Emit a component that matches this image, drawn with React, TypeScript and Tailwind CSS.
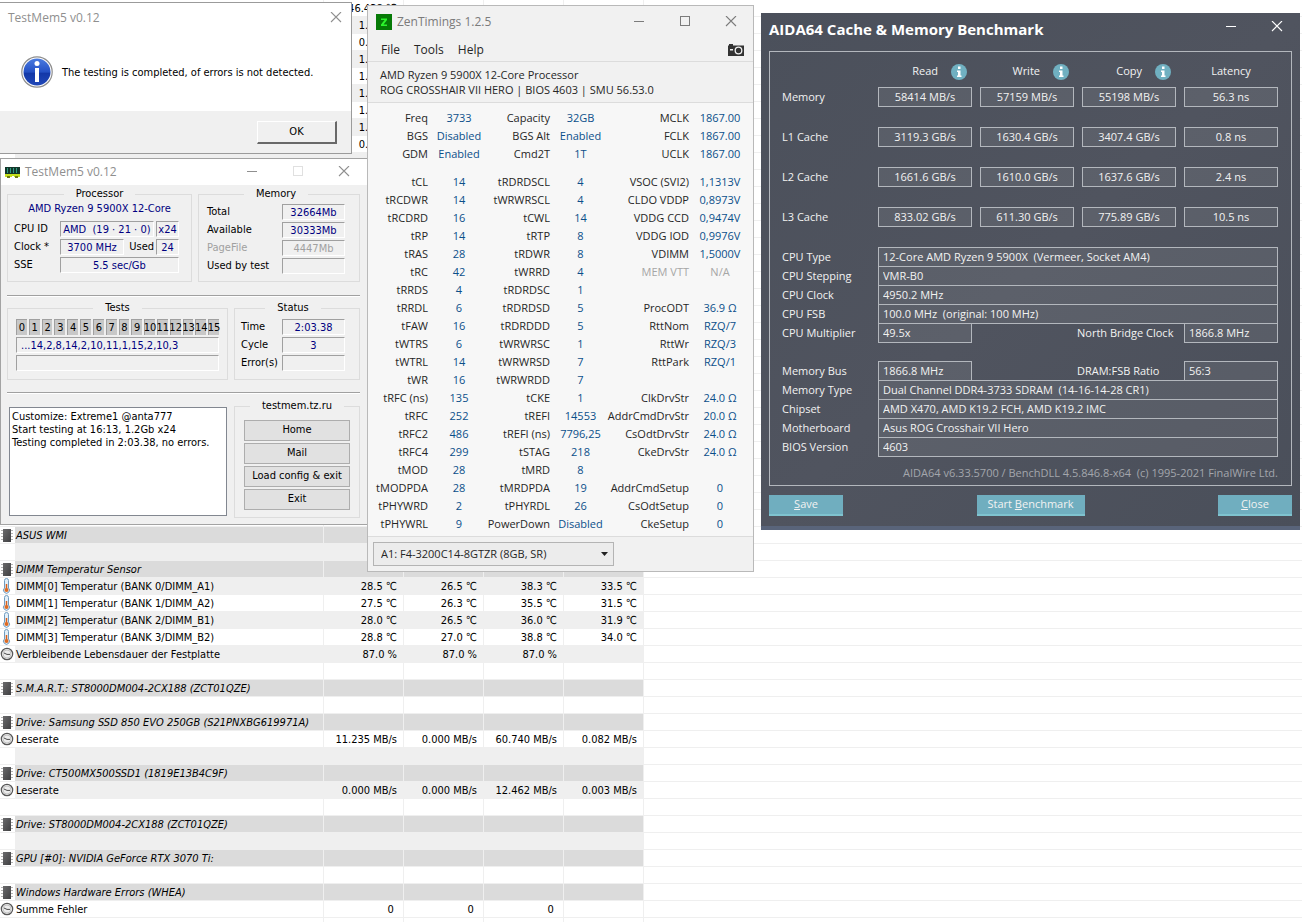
import { Fragment, type ReactNode } from "react";

type SensorRow = {
	kind?: "head" | "temp" | "clock";
	name?: string;
	values?: string[];
	shaded?: boolean;
};

const topVoltages = ["46.438 ℃", "1.263 V", "0.825 V", "1.131 V", "1.788 V", "1.100 V", "1.825 V", "1.263 V", "0.950 V"];

const sensorRows: SensorRow[] = [
	...topVoltages.map((v, i) => ({ values: [v], shaded: i % 2 === 1 })),
	...Array.from({ length: 22 }, (_, i) => ({ shaded: i % 2 === 0 })),
	{ kind: "head", name: "ASUS WMI" },
	{ shaded: true },
	{ kind: "head", name: "DIMM Temperatur Sensor" },
	{ kind: "temp", name: "DIMM[0] Temperatur (BANK 0/DIMM_A1)", values: ["28.5 ℃", "26.5 ℃", "38.3 ℃", "33.5 ℃"], shaded: true },
	{ kind: "temp", name: "DIMM[1] Temperatur (BANK 1/DIMM_A2)", values: ["27.5 ℃", "26.3 ℃", "35.5 ℃", "31.5 ℃"] },
	{ kind: "temp", name: "DIMM[2] Temperatur (BANK 2/DIMM_B1)", values: ["28.0 ℃", "26.5 ℃", "36.0 ℃", "31.9 ℃"], shaded: true },
	{ kind: "temp", name: "DIMM[3] Temperatur (BANK 3/DIMM_B2)", values: ["28.8 ℃", "27.0 ℃", "38.8 ℃", "34.0 ℃"] },
	{ kind: "clock", name: "Verbleibende Lebensdauer der Festplatte", values: ["87.0 %", "87.0 %", "87.0 %"], shaded: true },
	{},
	{ kind: "head", name: "S.M.A.R.T.: ST8000DM004-2CX188 (ZCT01QZE)" },
	{},
	{ kind: "head", name: "Drive: Samsung SSD 850 EVO 250GB (S21PNXBG619971A)" },
	{ kind: "clock", name: "Leserate", values: ["11.235 MB/s", "0.000 MB/s", "60.740 MB/s", "0.082 MB/s"] },
	{ shaded: true },
	{ kind: "head", name: "Drive: CT500MX500SSD1 (1819E13B4C9F)" },
	{ kind: "clock", name: "Leserate", values: ["0.000 MB/s", "0.000 MB/s", "12.462 MB/s", "0.003 MB/s"], shaded: true },
	{},
	{ kind: "head", name: "Drive: ST8000DM004-2CX188 (ZCT01QZE)" },
	{ shaded: true },
	{ kind: "head", name: "GPU [#0]: NVIDIA GeForce RTX 3070 Ti:" },
	{},
	{ kind: "head", name: "Windows Hardware Errors (WHEA)" },
	{ kind: "clock", name: "Summe Fehler", values: ["0\u00a0", "0\u00a0", "0\u00a0"] },
	{},
];

const clockTimings = [
	["Freq", "3733", "Capacity", "32GB", "MCLK", "1867.00"],
	["BGS", "Disabled", "BGS Alt", "Enabled", "FCLK", "1867.00"],
	["GDM", "Enabled", "Cmd2T", "1T", "UCLK", "1867.00"],
];

const timings = [
	["tCL", "14", "tRDRDSCL", "4", "VSOC (SVI2)", "1,1313V"],
	["tRCDWR", "14", "tWRWRSCL", "4", "CLDO VDDP", "0,8973V"],
	["tRCDRD", "16", "tCWL", "14", "VDDG CCD", "0,9474V"],
	["tRP", "14", "tRTP", "8", "VDDG IOD", "0,9976V"],
	["tRAS", "28", "tRDWR", "8", "VDIMM", "1,5000V"],
	["tRC", "42", "tWRRD", "4", "MEM VTT", "N/A"],
	["tRRDS", "4", "tRDRDSC", "1", "", ""],
	["tRRDL", "6", "tRDRDSD", "5", "ProcODT", "36.9 Ω"],
	["tFAW", "16", "tRDRDDD", "5", "RttNom", "RZQ/7"],
	["tWTRS", "6", "tWRWRSC", "1", "RttWr", "RZQ/3"],
	["tWTRL", "14", "tWRWRSD", "7", "RttPark", "RZQ/1"],
	["tWR", "16", "tWRWRDD", "7", "", ""],
	["tRFC (ns)", "135", "tCKE", "1", "ClkDrvStr", "24.0 Ω"],
	["tRFC", "252", "tREFI", "14553", "AddrCmdDrvStr", "20.0 Ω"],
	["tRFC2", "486", "tREFI (ns)", "7796,25", "CsOdtDrvStr", "24.0 Ω"],
	["tRFC4", "299", "tSTAG", "218", "CkeDrvStr", "24.0 Ω"],
	["tMOD", "28", "tMRD", "8", "", ""],
	["tMODPDA", "28", "tMRDPDA", "19", "AddrCmdSetup", "0"],
	["tPHYWRD", "2", "tPHYRDL", "26", "CsOdtSetup", "0"],
	["tPHYWRL", "9", "PowerDown", "Disabled", "CkeSetup", "0"],
];

const benchmarks = [
	["Memory", "58414 MB/s", "57159 MB/s", "55198 MB/s", "56.3 ns"],
	["L1 Cache", "3119.3 GB/s", "1630.4 GB/s", "3407.4 GB/s", "0.8 ns"],
	["L2 Cache", "1661.6 GB/s", "1610.0 GB/s", "1637.6 GB/s", "2.4 ns"],
	["L3 Cache", "833.02 GB/s", "611.30 GB/s", "775.89 GB/s", "10.5 ns"],
];

function ChipIcon() {
	return (
		<svg width="14" height="15" viewBox="0 0 14 15" className="block">
			<defs>
				<linearGradient id="chipBody" x1="0" y1="0" x2="1" y2="1">
					<stop offset="0" stopColor="#6a6a6c" />
					<stop offset="1" stopColor="#404042" />
				</linearGradient>
			</defs>
			<path d="M1 2.5h12M1 5.5h12M1 8.5h12M1 11.5h12" stroke="#b4b4b4" strokeWidth="1" />
			<rect x="3" y="1" width="8" height="13" fill="url(#chipBody)" />
		</svg>
	);
}

function ThermometerIcon() {
	return (
		<svg width="13" height="16" viewBox="0 0 13 16" className="block">
			<path d="M4.500 2.500a2 2 0 0 1 4 0v7.500a3 3 0 1 1-4 0z" fill="#e3eff8" stroke="#6f9cc0" />
			<path d="M6.500 6v6" stroke="#d9601c" strokeWidth="1.500" />
			<circle cx="6.500" cy="12" r="2" fill="#dd6a22" />
		</svg>
	);
}

function ClockIcon() {
	return (
		<svg width="14" height="14" viewBox="0 0 14 14" className="block">
			<circle cx="7" cy="7" r="5.7" fill="#ececec" stroke="#575757" strokeWidth="1.2" />
			<circle cx="7" cy="7" r="4" fill="none" stroke="#c4c4c4" />
			<path d="M4 6l3 1.4h3" fill="none" stroke="#4a4a4a" />
		</svg>
	);
}

function MinimizeGlyph() {
	return (
		<svg width="12" height="12" viewBox="0 0 12 12" stroke="currentColor">
			<path d="M1 5.5h10" />
		</svg>
	);
}

function MaximizeGlyph() {
	return (
		<svg width="12" height="12" viewBox="0 0 12 12" stroke="currentColor" fill="none">
			<rect x="1.5" y="0.5" width="9" height="9" />
		</svg>
	);
}

function CloseGlyph() {
	return (
		<svg width="12" height="12" viewBox="0 0 12 12" stroke="currentColor" strokeWidth="1.1">
			<path d="M1 0l10 10M11 0L1 10" />
		</svg>
	);
}

function InfoBubble() {
	return (
		<svg width="16" height="16" viewBox="0 0 16 16">
			<circle cx="8" cy="8" r="8" fill="#70b0c1" />
			<path d="M7 2.500h2.500V5H7zM6 6.500h3.500V11.500h1V13H6v-1.500h1V8H6z" fill="#fff" />
		</svg>
	);
}

function SensorTable() {
	return (
		<table className="w-full table-fixed border-separate border-spacing-0 text-[11px] leading-[14px] whitespace-nowrap text-black">
			<colgroup>
				<col className="w-[15px]" />
				<col className="w-[309px]" />
				<col className="w-20" />
				<col className="w-20" />
				<col className="w-20" />
				<col className="w-20" />
				<col />
			</colgroup>
			<tbody>
				{sensorRows.map((row, i) => {
					const bg = row.kind === "head" ? "bg-[#dbdbdb]" : row.shaded ? "bg-[#efefef]" : "bg-white";
					return (
						<tr key={i} className="h-[17px]">
							<td className="border-b border-[#efefef] p-0">
								{row.kind === "head" && <ChipIcon />}
								{row.kind === "temp" && <ThermometerIcon />}
								{row.kind === "clock" && <ClockIcon />}
							</td>
							<td className={`border-r border-b border-[#efefef] p-0 pt-0.5 pl-px ${bg} ${row.kind === "head" ? "italic" : ""}`}>
								{row.name}
							</td>
							{[0, 1, 2, 3].map((c) => (
								<td key={c} className={`border-r border-b border-[#efefef] p-0 pt-0.5 pr-1.5 text-right ${bg}`}>
									{row.values?.[c]}
								</td>
							))}
							<td className="border-b border-[#efefef] p-0" />
						</tr>
					);
				})}
			</tbody>
		</table>
	);
}

function MessageBox() {
	return (
		<section className="absolute top-[2px] left-0 w-[352px] border border-l-0 border-[#9b9b9b] bg-white text-[11px] text-black">
			<header className="flex h-[30px] items-center justify-between pr-[9px] pl-2 font-[family-name:'Open_Sans',sans-serif] text-xs text-[#8f8f8f]">
				<h2>TestMem5 v0.12</h2>
				<button aria-label="Close message">
					<CloseGlyph />
				</button>
			</header>
			<div className="flex h-[78px] items-center gap-[9px] pl-[21px]">
				<svg width="32" height="32" viewBox="0 0 32 32">
					<defs>
						<linearGradient id="infoBlue" x1="0" y1="0" x2="0" y2="1">
							<stop offset="0" stopColor="#4a7be0" />
							<stop offset="0.5" stopColor="#2450c4" />
							<stop offset="0.55" stopColor="#1338a8" />
							<stop offset="1" stopColor="#2048b8" />
						</linearGradient>
					</defs>
					<circle cx="16" cy="16" r="15.200" fill="#fff" stroke="#8d8d8d" strokeWidth="1.200" />
					<circle cx="16" cy="16" r="13.500" fill="url(#infoBlue)" />
					<circle cx="16" cy="7.500" r="2.500" fill="#fff" />
					<path d="M14 12h4v14h-4z" fill="#fff" />
				</svg>
				<p className="pt-0.5">The testing is completed, of errors is not detected.</p>
			</div>
			<footer className="flex h-[42px] items-center justify-end bg-[#f0f0f0] pr-3.5">
				<button className="h-[23px] w-20 border border-r-2 border-b-2 border-white border-r-[#696969] border-b-[#696969] bg-[#f0f0f0] pt-0.5">OK</button>
			</footer>
		</section>
	);
}

function Group({ title, className, children }: { title: string; className: string; children: ReactNode }) {
	return (
		<fieldset className={`min-w-0 border border-[#dcdcdc] ${className}`}>
			<legend className="mx-auto px-3 text-center leading-[14px]">{title}</legend>
			{children}
		</fieldset>
	);
}

function SunkenField({ id, value, className, label }: { id: string; value: string; className: string; label?: string }) {
	return (
		<input
			id={id}
			aria-label={label}
			readOnly
			value={value}
			className={`h-4 min-w-0 border border-white border-t-[#a0a0a0] border-l-[#a0a0a0] bg-transparent px-0 leading-[14px] ${className}`}
		/>
	);
}

function LabeledField({ id, label, value, muted }: { id: string; label: string; value: string; muted?: boolean }) {
	return (
		<div className={`flex items-center justify-between leading-4 ${muted ? "text-[#a0a0a0]" : ""}`}>
			<label htmlFor={id}>{label}</label>
			<SunkenField id={id} value={value} className={`w-[63px] text-center ${muted ? "" : "text-[#000080]"}`} />
		</div>
	);
}

function Divider() {
	return <hr className="border-t border-b border-t-[#a0a0a0] border-b-white" />;
}

function TestMemWindow() {
	const button = "h-[21px] w-full border border-[#adadad] bg-[#e1e1e1]";
	return (
		<section className="absolute top-[158px] left-0 w-[368px] border border-[#a3a3a3] bg-[#f0f0f0] text-[11px] whitespace-nowrap text-black">
			<header className="flex h-[26px] items-center bg-white pr-[17px] pl-1 font-[family-name:'Open_Sans',sans-serif] text-xs text-[#8f8f8f]">
				<svg width="15" height="11" viewBox="0 0 15 11">
					<path d="M0 0h15v8H0z" fill="#12372b" />
					<path d="M2.500 1v5M5.500 1v5M8.500 1v5M11.500 1v5" stroke="#2f9c80" />
					<path d="M0 7h15v3h-6V9H7v1H0z" fill="#c6e01c" />
					<path d="M2 9h3v2H2zM10 9h3v2h-3z" fill="#6d7c12" />
				</svg>
				<h2 className="ml-[5px] flex-1">TestMem5 v0.12</h2>
				<div className="flex gap-[34px]">
					<button aria-label="Minimize TestMem5">
						<MinimizeGlyph />
					</button>
					<button aria-label="Maximize TestMem5" disabled className="text-[#e0e0e0]">
						<MaximizeGlyph />
					</button>
					<button aria-label="Close TestMem5">
						<CloseGlyph />
					</button>
				</div>
			</header>
			<div className="pt-0.5 pr-[7px] pb-1.5 pl-1.5">
				<div className="flex gap-1.5">
					<Group title="Processor" className="w-[185px] px-1.5 pb-2">
						<p className="text-center leading-4 text-[#000080]">AMD Ryzen 9 5900X 12-Core</p>
						<div className="mt-1 flex flex-col gap-0.5 pr-1.5 leading-4">
							<div className="flex gap-0.5">
								<label htmlFor="cpuid" className="w-11">
									CPU ID
								</label>
								<SunkenField id="cpuid" value="AMD  (19 · 21 · 0)" className="w-[95px] text-center text-[#000080]" />
								<SunkenField id="threads" label="Threads" value="x24" className="w-[23px] text-center text-[#000080]" />
							</div>
							<div className="flex gap-0.5">
								<label htmlFor="clock" className="w-11">
									Clock *
								</label>
								<SunkenField id="clock" value="3700 MHz" className="w-[65px] text-center text-[#000080]" />
								<label htmlFor="used" className="w-7 text-right">
									Used
								</label>
								<SunkenField id="used" value="24" className="w-[23px] text-center text-[#000080]" />
							</div>
							<div className="flex gap-0.5">
								<label htmlFor="sse" className="w-11">
									SSE
								</label>
								<SunkenField id="sse" value="5.5 sec/Gb" className="w-[120px] text-center text-[#000080]" />
							</div>
						</div>
					</Group>
					<Group title="Memory" className="flex-1 pr-3.5 pl-2">
						<div className="mt-[3px] flex flex-col gap-0.5">
							<LabeledField id="total" label="Total" value="32664Mb" />
							<LabeledField id="available" label="Available" value="30333Mb" />
							<LabeledField id="pagefile" label="PageFile" value="4447Mb" muted />
							<LabeledField id="usedbytest" label="Used by test" value="" />
						</div>
					</Group>
				</div>
				<div className="mt-[13px] mb-1">
					<Divider />
				</div>
				<div className="flex gap-1.5">
					<Group title="Tests" className="w-[221px] px-2 pb-2">
						<div className="mt-1 flex flex-col gap-0.5">
							<ol className="flex h-4 gap-0.5 leading-4">
								{Array.from({ length: 16 }, (_, i) => (
									<li key={i} className="flex min-w-0 flex-1 justify-center border-t border-l border-[#a0a0a0] bg-[#c8c8c8]">
										{i}
									</li>
								))}
							</ol>
							<SunkenField id="queue" label="Test queue" value="...14,2,8,14,2,10,11,1,15,2,10,3" className="w-full indent-1 text-[#000080]" />
							<SunkenField id="progress" label="Progress" value="" className="w-full" />
						</div>
					</Group>
					<Group title="Status" className="flex-1 pr-3.5 pl-1.5">
						<div className="mt-1 flex flex-col gap-0.5">
							<LabeledField id="time" label="Time" value="2:03.38" />
							<LabeledField id="cycle" label="Cycle" value="3" />
							<LabeledField id="errors" label="Error(s)" value="" />
						</div>
					</Group>
				</div>
				<div className="mt-3 mb-[5px]">
					<Divider />
				</div>
				<div className="flex gap-1.5">
					<div className="flex w-[221px] pt-2 pr-px pb-0.5 pl-0.5">
						<textarea
							aria-label="Log"
							readOnly
							className="h-[109px] w-full resize-none border border-[#828790] bg-white px-0.5 py-0.5 leading-[13px]"
							value={"Customize: Extreme1 @anta777\nStart testing at 16:13, 1.2Gb x24\nTesting completed in 2:03.38, no errors."}
						/>
					</div>
					<Group title="testmem.tz.ru" className="flex-1 px-[9px] pb-[7px]">
						<div className="mt-[7px] flex flex-col gap-0.5">
							<button className={button}>Home</button>
							<button className={button}>Mail</button>
							<button className={button}>Load config &amp; exit</button>
							<button className={button}>Exit</button>
						</div>
					</Group>
				</div>
			</div>
		</section>
	);
}

function TimingRows({ rows }: { rows: string[][] }) {
	return (
		<>
			{rows.map((row) => (
				<tr key={row[0]} className="h-[18px]">
					{[0, 2, 4].map((c) => {
						const off = row[c] === "MEM VTT";
						return (
							<Fragment key={c}>
								<th scope="row" className={`p-0 font-normal ${off ? "text-[#a6a6a6]" : ""}`}>
									<span className="flex justify-end">{row[c]}</span>
								</th>
								<td className={`p-0 text-center ${off ? "text-[#a6a6a6]" : "text-[#0b4f8a]"}`}>{row[c + 1]}</td>
							</Fragment>
						);
					})}
				</tr>
			))}
		</>
	);
}

function ZenTimingsWindow() {
	return (
		<section className="absolute top-[5px] left-[367px] w-[387px] border border-[#b9b9b9] bg-[#f1f1f1] font-[family-name:'Open_Sans',sans-serif] text-[11px] whitespace-nowrap text-[#262626]">
			<header className="flex h-8 items-center pr-4 pl-2 text-xs text-[#7b7b7b]">
				<svg width="16" height="16" viewBox="0 0 16 16">
					<rect width="16" height="16" fill="#067a06" />
					<path d="M5 4.500h6v1.500L7.500 10.500H11V12H5v-1.500L8.500 6H5z" fill="#2cf52c" />
				</svg>
				<h2 className="ml-[5px] flex-1">ZenTimings 1.2.5</h2>
				<div className="flex gap-[34px]">
					<button aria-label="Minimize ZenTimings">
						<MinimizeGlyph />
					</button>
					<button aria-label="Maximize ZenTimings">
						<MaximizeGlyph />
					</button>
					<button aria-label="Close ZenTimings">
						<CloseGlyph />
					</button>
				</div>
			</header>
			<nav className="flex h-6 items-center gap-3.5 border-b border-[#dcdcdc] pr-[9px] pl-[13px] text-xs">
				<button>File</button>
				<button>Tools</button>
				<button>Help</button>
				<button aria-label="Screenshot" className="ml-auto">
					<svg width="16" height="12" viewBox="0 0 16 12">
						<path d="M0 1.500h1V0h4v1.500h11V12H0z" fill="#333" />
						<circle cx="10.500" cy="6.500" r="3.300" fill="#333" stroke="#f1f1f1" strokeWidth="1.300" />
						<path d="M2 5h3v1.500H2z" fill="#f1f1f1" />
					</svg>
				</button>
			</nav>
			<div className="border-b border-[#dcdcdc] px-3 py-[5px] leading-[15px]">
				<p>AMD Ryzen 9 5900X 12-Core Processor</p>
				<p>ROG CROSSHAIR VII HERO | BIOS 4603 | SMU 56.53.0</p>
			</div>
			<div className="bg-[#f7f7f7] pt-1.5 pr-0.5 pb-[3px]">
				<table className="w-full table-fixed leading-4">
					<colgroup>
						<col className="w-[60px]" />
						<col className="w-[62px]" />
						<col className="w-[60px]" />
						<col className="w-[61px]" />
						<col className="w-[78px]" />
						<col className="w-[62px]" />
					</colgroup>
					<tbody>
						<TimingRows rows={clockTimings} />
						<tr className="h-2.5" />
						<TimingRows rows={timings} />
					</tbody>
				</table>
			</div>
			<footer className="border-t border-[#dcdcdc] p-[5px]">
				<div className="relative w-[241px]">
					<select aria-label="Memory module" className="h-6 w-full appearance-none border border-[#b4b4b4] bg-[#ececec] px-[7px]">
						<option>A1: F4-3200C14-8GTZR (8GB, SR)</option>
					</select>
					<svg width="7" height="4" viewBox="0 0 7 4" className="pointer-events-none absolute top-2.5 right-1.5">
						<path d="M0 0h7L3.500 4z" fill="#222" />
					</svg>
				</div>
			</footer>
		</section>
	);
}

function AidaField({ id, value, className }: { id: string; value: string; className: string }) {
	return <input id={id} readOnly value={value} className={`h-5 min-w-0 border border-[#b3b7bd] bg-white/7 px-1 pb-px ${className}`} />;
}

function AidaRow({ label, id, value }: { label: string; id: string; value: string }) {
	return (
		<div className="-mb-px flex h-5 items-center">
			<label htmlFor={id} className="w-24">
				{label}
			</label>
			<AidaField id={id} value={value} className="flex-1" />
		</div>
	);
}

function AidaSplitRow({ label, id, value, label2, id2, value2 }: Record<string, string>) {
	return (
		<div className="-mb-px flex h-5 items-center">
			<label htmlFor={id} className="w-24">
				{label}
			</label>
			<AidaField id={id} value={value} className="w-[94px]" />
			<label htmlFor={id2} className="ml-auto w-[107px]">
				{label2}
			</label>
			<AidaField id={id2} value={value2} className="w-[94px]" />
		</div>
	);
}

function AidaWindow() {
	const button = "h-[21px] border-b-2 border-[#7fc3cf] bg-[#70aebf]";
	return (
		<section className="absolute top-[13px] left-[761px] w-[539px] border-b-4 border-[#59647a] bg-[#4c515d] bg-linear-to-br from-[#4b505b] via-[#50545f] to-[#4a4f5a] px-2 pb-2.5 font-[family-name:'Open_Sans',sans-serif] text-[11px] whitespace-nowrap text-[#f2f2f2]">
			<header className="flex h-[38px] items-center pr-[9px] pb-1.5 text-white">
				<h2 className="flex-1 text-[15px] leading-5 font-bold">AIDA64 Cache &amp; Memory Benchmark</h2>
				<div className="flex gap-[34px] pb-1">
					<button aria-label="Minimize AIDA64">
						<MinimizeGlyph />
					</button>
					<button aria-label="Close AIDA64">
						<CloseGlyph />
					</button>
				</div>
			</header>
			<div className="border border-[#b3b7bd] pr-[5px] pb-0.5 pl-3">
				<table className="w-full table-fixed">
					<colgroup>
						<col />
						<col className="w-[102px]" />
						<col className="w-[102px]" />
						<col className="w-[102px]" />
						<col className="w-[102px]" />
					</colgroup>
					<thead>
						<tr className="h-[35px]">
							<td />
							{["Read", "Write", "Copy"].map((h) => (
								<th key={h} scope="col" className="p-0 pt-1 pr-2 font-normal">
									<span className="flex items-center justify-end gap-[13px] pr-[5px]">
										{h}
										<InfoBubble />
									</span>
								</th>
							))}
							<th scope="col" className="p-0 pt-1 pr-2 font-normal">
								Latency
							</th>
						</tr>
					</thead>
					<tbody>
						{benchmarks.map((row) => (
							<tr key={row[0]} className="h-10 align-top">
								<th scope="row" className="p-0 text-left leading-5 font-normal">
									{row[0]}
								</th>
								{row.slice(1).map((v) => (
									<td key={v} className="p-0 pr-2">
										<div className="h-5 border border-[#b3b7bd] bg-white/7 text-center leading-[18px]">{v}</div>
									</td>
								))}
							</tr>
						))}
					</tbody>
				</table>
				<div className="pr-2">
					<AidaRow id="cputype" label="CPU Type" value="12-Core AMD Ryzen 9 5900X  (Vermeer, Socket AM4)" />
					<AidaRow id="stepping" label="CPU Stepping" value="VMR-B0" />
					<AidaRow id="cpuclock" label="CPU Clock" value="4950.2 MHz" />
					<AidaRow id="fsb" label="CPU FSB" value="100.0 MHz  (original: 100 MHz)" />
					<AidaSplitRow id="multiplier" label="CPU Multiplier" value="49.5x" id2="nbclock" label2="North Bridge Clock" value2="1866.8 MHz" />
					<div className="mt-[19px]">
						<AidaSplitRow id="membus" label="Memory Bus" value="1866.8 MHz" id2="ratio" label2="DRAM:FSB Ratio" value2="56:3" />
						<AidaRow id="memtype" label="Memory Type" value="Dual Channel DDR4-3733 SDRAM  (14-16-14-28 CR1)" />
						<AidaRow id="chipset" label="Chipset" value="AMD X470, AMD K19.2 FCH, AMD K19.2 IMC" />
						<AidaRow id="board" label="Motherboard" value="Asus ROG Crosshair VII Hero" />
						<AidaRow id="bios" label="BIOS Version" value="4603" />
					</div>
					<p className="mt-[7px] text-right leading-5 whitespace-pre text-[#a3a6ac]">AIDA64 v6.33.5700 / BenchDLL 4.5.846.8-x64  (c) 1995-2021 FinalWire Ltd.</p>
				</div>
			</div>
			<footer className="mt-[9px] flex justify-between">
				<button className={`w-[74px] ${button}`}>
					<u>S</u>ave
				</button>
				<button className={`w-[108px] ${button}`}>
					Start <u>B</u>enchmark
				</button>
				<button className={`w-[74px] ${button}`}>
					<u>C</u>lose
				</button>
			</footer>
		</section>
	);
}

export default function App() {
	return (
		<main className="relative h-screen overflow-hidden bg-white font-[family-name:'DejaVu_Sans_Condensed','DejaVu_Sans',sans-serif]">
			<SensorTable />
			<MessageBox />
			<TestMemWindow />
			<AidaWindow />
			<ZenTimingsWindow />
		</main>
	);
}
